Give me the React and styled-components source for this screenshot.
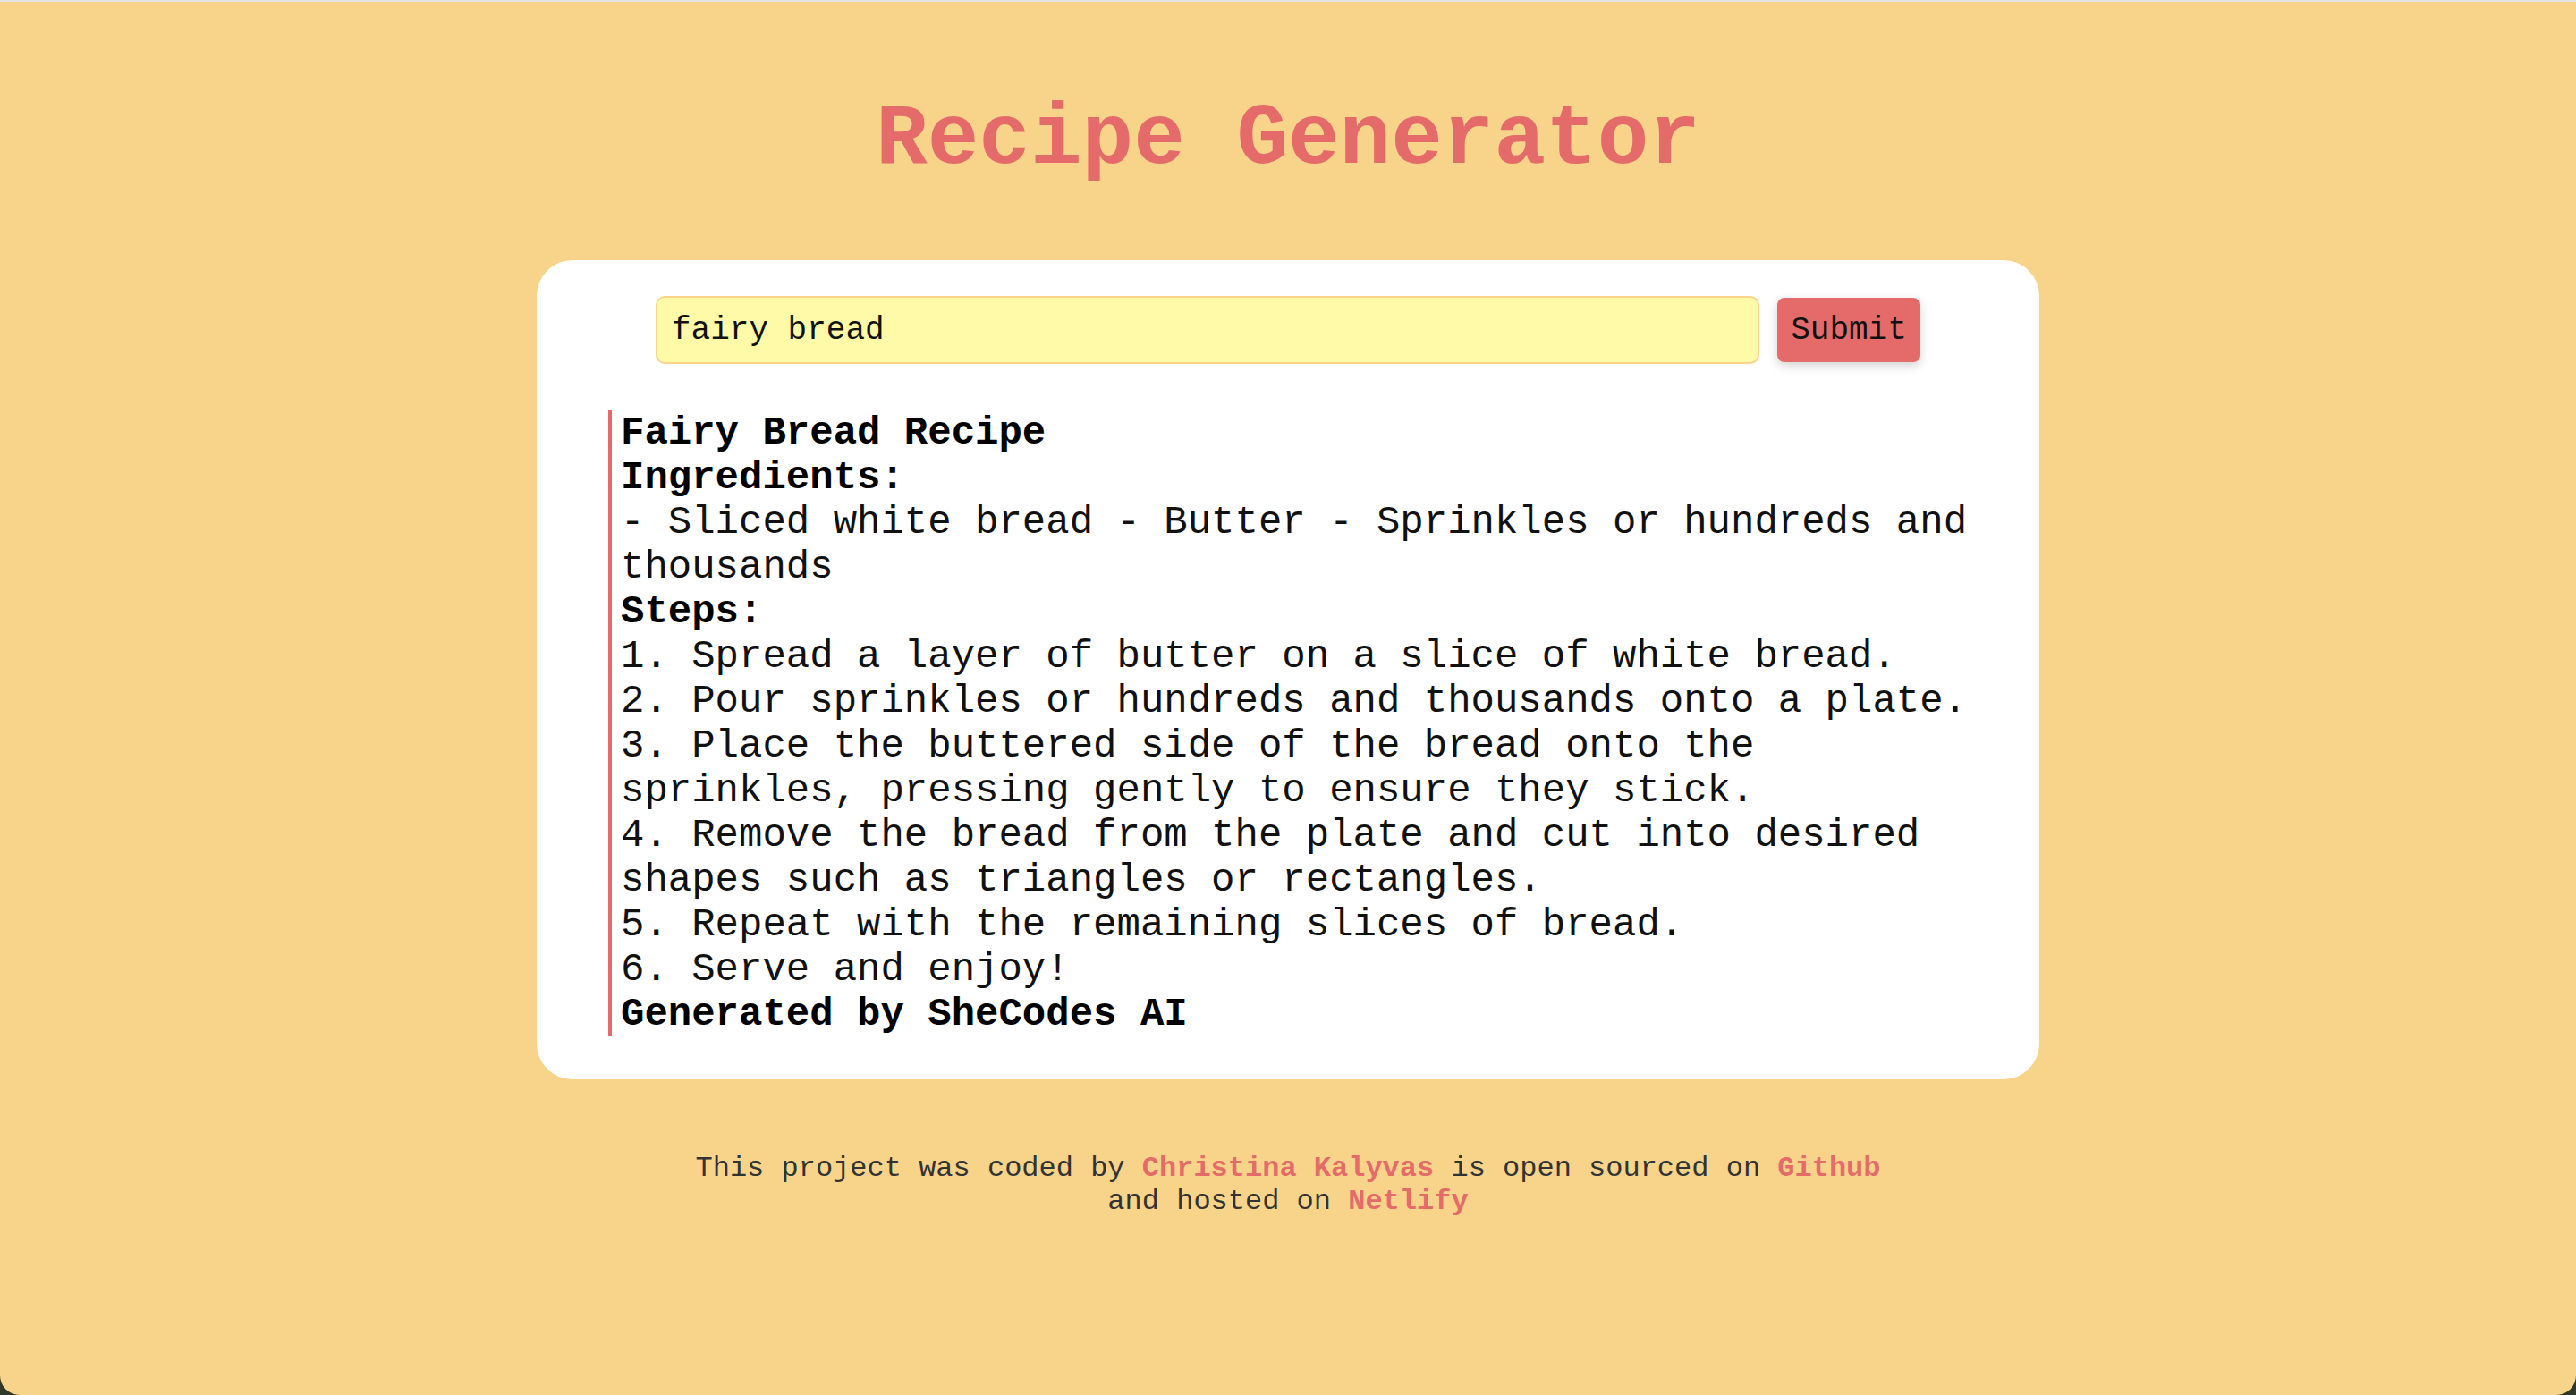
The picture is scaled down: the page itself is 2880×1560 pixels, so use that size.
import React from 'react';
import styled, { createGlobalStyle } from 'styled-components';

const GlobalStyle = createGlobalStyle`
  html {
    background: #2f3a2b;
  }
  body {
    margin: 0;
    font-family: 'Courier New', 'Liberation Mono', monospace;
  }
`;

const Page = styled.div`
  box-sizing: border-box;
  min-height: 100vh;
  padding-top: 100px;
  background: #f8d48b;
  border-top: 2px solid #e3e3e3;
  border-radius: 0 0 22px 22px;
`;

const Title = styled.h1`
  margin: 0 0 80px;
  text-align: center;
  font-size: 96px;
  font-weight: 700;
  color: #e56b6b;
`;

const Card = styled.main`
  box-sizing: border-box;
  width: 1680px;
  margin: 0 auto;
  padding: 40px 56px 48px 80px;
  background: #fff;
  border-radius: 40px;
`;

const SearchForm = styled.form`
  display: flex;
  align-items: center;
  justify-content: center;
  gap: 20px;
  margin: 0 0 52px -24px;
`;

const SearchInput = styled.input`
  box-sizing: border-box;
  width: 1234px;
  height: 76px;
  padding: 0 16px;
  background: #fffaa8;
  border: 2px solid #fbd489;
  border-radius: 10px;
  font-family: inherit;
  font-size: 36px;
  color: #111;
  outline: none;
`;

const SubmitButton = styled.button`
  box-sizing: border-box;
  width: 160px;
  height: 72px;
  padding: 0;
  background: #e56b6a;
  border: none;
  border-radius: 8px;
  box-shadow: 0 4px 12px rgba(0, 0, 0, 0.18);
  font-family: inherit;
  font-size: 36px;
  color: #111;
  cursor: pointer;
`;

const Recipe = styled.div`
  padding-left: 10px;
  border-left: 4px solid #e56b6b;
  font-size: 44px;
  color: #111;

  strong {
    font-weight: 700;
    color: #000;
  }
`;

const Footer = styled.footer`
  width: 1360px;
  margin: 81px auto 0;
  text-align: center;
  font-size: 32px;
  color: #333;
`;

const FooterLink = styled.a`
  color: #e56b6b;
  font-weight: 700;
  text-decoration: none;
`;

const steps = [
  '1. Spread a layer of butter on a slice of white bread.',
  '2. Pour sprinkles or hundreds and thousands onto a plate.',
  '3. Place the buttered side of the bread onto the sprinkles, pressing gently to ensure they stick.',
  '4. Remove the bread from the plate and cut into desired shapes such as triangles or rectangles.',
  '5. Repeat with the remaining slices of bread.',
  '6. Serve and enjoy!',
];

const App = () => {
  return (
    <Page>
      <GlobalStyle />
      <Title>Recipe Generator</Title>
      <Card>
        <SearchForm onSubmit={(e) => e.preventDefault()}>
          <SearchInput type="search" defaultValue="fairy bread" />
          <SubmitButton type="submit">Submit</SubmitButton>
        </SearchForm>
        <Recipe>
          <strong>Fairy Bread Recipe</strong>
          <br />
          <strong>Ingredients:</strong>
          <br />- Sliced white bread - Butter - Sprinkles or hundreds and
          thousands
          <br />
          <strong>Steps:</strong>
          {steps.map((step, i) => (
            <React.Fragment key={i}>
              <br />
              {step}
            </React.Fragment>
          ))}
          <br />
          <strong>Generated by SheCodes AI</strong>
        </Recipe>
      </Card>
      <Footer>
        This project was coded by{' '}
        <FooterLink href="#">Christina Kalyvas</FooterLink> is open sourced on{' '}
        <FooterLink href="#">Github</FooterLink> and hosted on{' '}
        <FooterLink href="#">Netlify</FooterLink>
      </Footer>
    </Page>
  );
};

export default App;
